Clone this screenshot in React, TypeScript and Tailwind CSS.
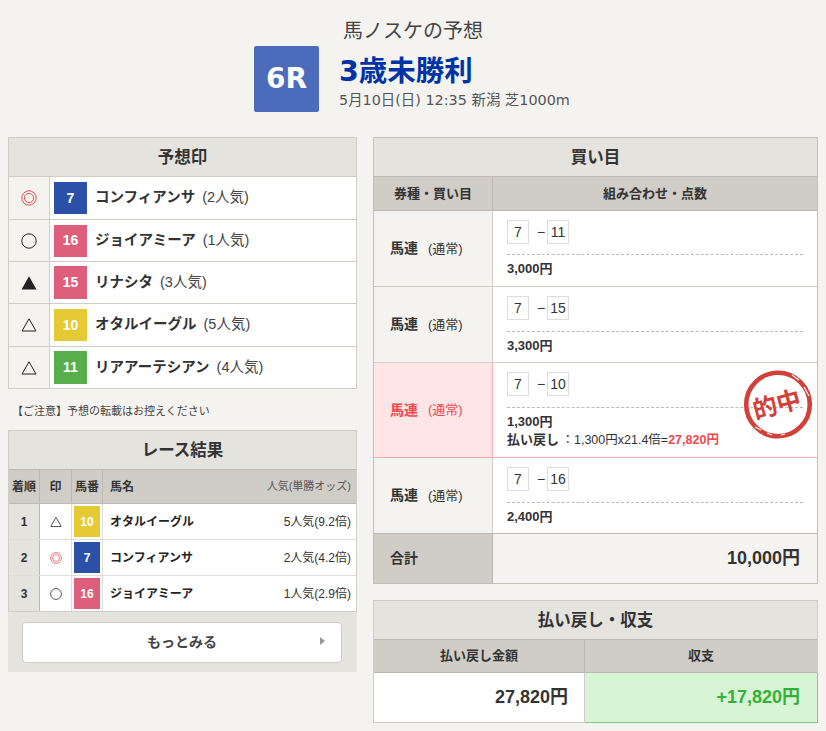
import React from "react";

const FONT = "font-['Liberation_Sans','Noto_Sans_CJK_JP',sans-serif]";
const HEAD_FONT = "font-['DejaVu_Sans','Noto_Sans_CJK_JP',sans-serif]";

type MarkKind = "double" | "circle" | "filled" | "tri";

function Mark({ kind, size = 16 }: { kind: MarkKind; size?: number }) {
  return (
    <svg width={size} height={size} viewBox="0 0 16 16" fill="none">
      {kind === "double" && (
        <>
          <circle cx="8" cy="8" r="7.2" stroke="#e0534f" strokeWidth="1" />
          <circle cx="8" cy="8" r="4.6" stroke="#e0534f" strokeWidth="1" />
        </>
      )}
      {kind === "circle" && <circle cx="8" cy="8" r="7.2" stroke="#222" strokeWidth="1" />}
      {kind === "filled" && <path d="M8 1.2 15.5 14.5H.5Z" fill="#222" />}
      {kind === "tri" && <path d="M8 1.8 15 14H1Z" stroke="#222" strokeWidth="1" strokeLinejoin="miter" />}
    </svg>
  );
}

const colors: Record<number, string> = {
  7: "bg-[#2b50a8]",
  16: "bg-[#de5f7c]",
  15: "bg-[#de5f7c]",
  10: "bg-[#e5c935]",
  11: "bg-[#57ae4a]",
};

const yosou: { mark: MarkKind; n: number; name: string; pop: string; h: string; bh: string }[] = [
  { mark: "double", n: 7, name: "コンフィアンサ", pop: "(2人気)", h: "h-[43px]", bh: "h-[32px]" },
  { mark: "circle", n: 16, name: "ジョイアミーア", pop: "(1人気)", h: "h-[42px]", bh: "h-[32px]" },
  { mark: "filled", n: 15, name: "リナシタ", pop: "(3人気)", h: "h-[42px]", bh: "h-[33px]" },
  { mark: "tri", n: 10, name: "オタルイーグル", pop: "(5人気)", h: "h-[43px]", bh: "h-[32px]" },
  { mark: "tri", n: 11, name: "リアアーテシアン", pop: "(4人気)", h: "h-[42px]", bh: "h-[33px]" },
];

const result: { rank: number; mark: MarkKind; n: number; name: string; odds: string; h: string }[] = [
  { rank: 1, mark: "tri", n: 10, name: "オタルイーグル", odds: "5人気(9.2倍)", h: "h-[36px]" },
  { rank: 2, mark: "double", n: 7, name: "コンフィアンサ", odds: "2人気(4.2倍)", h: "h-[36px]" },
  { rank: 3, mark: "circle", n: 16, name: "ジョイアミーア", odds: "1人気(2.9倍)", h: "h-[36px]" },
];

function PanelTitle({ children }: { children: React.ReactNode }) {
  return (
    <div className="h-[38px] flex items-center justify-center bg-[#e4e3de] text-[16.5px] font-bold text-[#333]">
      {children}
    </div>
  );
}

function Box({ v }: { v: number }) {
  return (
    <span className="w-[22px] h-[24px] flex items-center justify-center bg-white border border-[#dddddd] text-[14px] text-[#333]">
      {v}
    </span>
  );
}

function Combo({ a, b }: { a: number; b: number }) {
  return (
    <div className="flex items-center">
      <Box v={a} />
      <span className="w-[18px] pl-[8px] text-[14px] leading-none text-[#333]">−</span>
      <Box v={b} />
    </div>
  );
}

function Stamp() {
  return (
    <svg className="absolute left-[250px] top-[6px]" width="70" height="71" viewBox="0 0 70 71">
      <circle cx="35" cy="35.5" r="31.8" fill="none" stroke="#d2403a" strokeWidth="4.6" />
      <path d="M49 6 56 11M61 18 66 27M12 58 18 61M24 64 29 66M38 66 42 65" stroke="#fff" strokeWidth="1.2" />
      <text
        x="34"
        y="44"
        textAnchor="middle"
        fontSize="24.5"
        fontWeight="700"
        fill="#d2403a"
        transform="rotate(-15 35 36)"
        fontFamily="'Noto Sans CJK JP', sans-serif"
      >
        的中
      </text>
    </svg>
  );
}

function BetRow({
  a,
  b,
  price,
  h,
  hit,
  last,
  first,
}: {
  a: number;
  b: number;
  price: string;
  h: string;
  hit?: boolean;
  last?: boolean;
  first?: boolean;
}) {
  const line = hit ? "border-[#f5aeae]" : "border-[#d0cdc6]";
  return (
    <div className={`flex ${h} border-b ${last ? "border-b-0" : line} relative ${hit ? "-mx-[1px] border-x" : ""}`}>
      <div
        className={`w-[119px] shrink-0 border-r ${line} flex items-center pl-[16px] ${
          hit ? "bg-[#ffe5e5] text-[#f0484e]" : "bg-[#f4f3ef] text-[#333]"
        }`}
      >
        <span className="text-[14px] font-bold">馬連</span>
        <span className="text-[13px] ml-[10px]">(通常)</span>
      </div>
      <div className="flex-1 bg-white px-[14px] pt-[9px] relative">
        <Combo a={a} b={b} />
        <div
          className={`border-t border-dashed border-[#bbbbbb] ${
            first ? "mt-[10px]" : "mt-[11px]"
          } pt-[5px] text-[13px] leading-[18px] font-bold text-[#333]`}
        >
          {price}
          {hit && (
            <div className="whitespace-nowrap">
              払い戻し
              <span className="font-normal text-[12.5px] -ml-[1px]"> ：1,300円x21.4倍=</span>
              <span className="text-[#f0484e] text-[12.5px]">27,820円</span>
            </div>
          )}
        </div>
        {hit && <Stamp />}
      </div>
    </div>
  );
}

export default function App() {
  return (
    <div className={`w-[826px] h-[731px] overflow-hidden bg-[#f4f3ef] text-[#333] ${FONT}`}>
      <header className={`${HEAD_FONT} pt-[18px] h-[137px]`}>
        <div className="text-center text-[20px] leading-[26px] text-[#444]">馬ノスケの予想</div>
        <div className="flex items-start ml-[254px] mt-[2px]">
          <div className="w-[65px] h-[66px] rounded-[2px] bg-[#4d6bbb] text-white text-[28px] font-bold flex items-center justify-center">
            6R
          </div>
          <div className="ml-[20px]">
            <div className="text-[28.5px] leading-[36px] mt-[8px] font-bold text-[#0033a5]">3歳未勝利</div>
            <div className="text-[14.4px] leading-[18px] text-[#555] mt-[1px]">5月10日(日) 12:35 新潟 芝1000m</div>
          </div>
        </div>
      </header>

      <main className="flex items-start pl-[8px] gap-[16px]">
        <div className="w-[349px]">
          <section className="border border-[#d0cdc6]">
            <PanelTitle>予想印</PanelTitle>
            {yosou.map((r) => (
              <div key={r.name} className={`flex ${r.h} border-t border-[#d0cdc6]`}>
                <div className="w-[41px] shrink-0 bg-[#f4f3ef] border-r border-[#d0cdc6] flex items-center justify-center">
                  <Mark kind={r.mark} />
                </div>
                <div className="flex-1 bg-white flex items-center pl-[4px]">
                  <div
                    className={`w-[33px] ${r.bh} ${colors[r.n]} text-white text-[14px] font-bold flex items-center justify-center`}
                  >
                    {r.n}
                  </div>
                  <span className="ml-[8px] text-[14.5px] font-bold text-[#333]">{r.name}</span>
                  <span className="ml-[7px] text-[14.5px] text-[#444]">{r.pop}</span>
                </div>
              </div>
            ))}
          </section>

          <p className="text-[11px] leading-[16px] text-[#444] mt-[14px] ml-[4px] h-[27px]">【ご注意】予想の転載はお控えください</p>

          <section className="bg-[#e4e3de]">
            <div className="border-x border-t border-[#d0cdc6]">
              <PanelTitle>レース結果</PanelTitle>
              <div className="flex h-[35px] bg-[#d0cdc6] border-y border-[#bdb9b0] text-[12px] font-bold text-[#333] items-stretch">
                <div className="w-[31px] border-r border-[#bdb9b0] flex items-center justify-center">着順</div>
                <div className="w-[32px] border-r border-[#bdb9b0] flex items-center justify-center">印</div>
                <div className="w-[31px] border-r border-[#bdb9b0] flex items-center justify-center">馬番</div>
                <div className="flex-1 flex items-center justify-between pl-[7px] pr-[5px]">
                  <span>馬名</span>
                  <span className="font-normal text-[11px] text-[#555]">人気(単勝オッズ)</span>
                </div>
              </div>
              {result.map((r, i) => (
                <div key={r.rank} className={`flex ${r.h} bg-white ${i < 2 ? "border-b border-[#e0ded8]" : "border-b border-[#d0cdc6]"}`}>
                  <div className="w-[31px] bg-[#e4e3de] border-r border-[#bdb9b0] flex items-center justify-center text-[12px] font-bold">
                    {r.rank}
                  </div>
                  <div className="w-[32px] border-r border-[#e0ded8] flex items-center justify-center">
                    <Mark kind={r.mark} size={12} />
                  </div>
                  <div className="w-[31px] border-r border-[#e0ded8] flex items-center justify-center">
                    <div
                      className={`w-[26px] h-[31px] ${colors[r.n]} text-white text-[12px] font-bold flex items-center justify-center`}
                    >
                      {r.n}
                    </div>
                  </div>
                  <div className="flex-1 flex items-center justify-between pl-[7px] pr-[5px] text-[12px]">
                    <span className="font-bold text-[#222]">{r.name}</span>
                    <span className="text-[#333]">{r.odds}</span>
                  </div>
                </div>
              ))}
            </div>
            <div className="h-[60px] px-[14px] pt-[10px]">
              <button className="relative w-[320px] h-[41px] bg-white border border-[#d0cdc6] rounded-[4px] text-[14px] font-bold text-[#444] flex items-center justify-center">
                もっとみる
                <span className="absolute right-[16px] top-[14px] w-0 h-0 border-y-[4px] border-y-transparent border-l-[5px] border-l-[#999]" />
              </button>
            </div>
          </section>
        </div>

        <div className="w-[445px]">
          <section className="border border-[#c4c0b8]">
            <PanelTitle>買い目</PanelTitle>
            <div className="flex h-[35px] bg-[#d0cdc6] border-y border-[#bdb9b0] text-[13px] font-bold text-[#333]">
              <div className="w-[119px] shrink-0 border-r border-[#bdb9b0] flex items-center justify-center">券種・買い目</div>
              <div className="flex-1 flex items-center justify-center">組み合わせ・点数</div>
            </div>
            <BetRow a={7} b={11} price="3,000円" h="h-[76px]" first />
            <BetRow a={7} b={15} price="3,300円" h="h-[76px]" />
            <BetRow a={7} b={10} price="1,300円" h="h-[95px]" hit />
            <BetRow a={7} b={16} price="2,400円" h="h-[75px]" last />
            <div className="flex h-[50px] border-t border-[#bdb9b0]">
              <div className="w-[119px] shrink-0 bg-[#d0cdc6] border-r border-[#bdb9b0] flex items-center pl-[16px] text-[14px] font-bold">合計</div>
              <div className="flex-1 bg-[#f4f3ef] flex items-center justify-end pr-[17px] text-[18px] font-bold text-[#333]">10,000円</div>
            </div>
          </section>

          <section className="border border-[#d0cdc6] mt-[16px]">
            <PanelTitle>払い戻し・収支</PanelTitle>
            <div className="flex h-[34px] bg-[#d0cdc6] border-y border-[#bdb9b0] text-[13px] font-bold text-[#333]">
              <div className="w-[211px] border-r border-[#bdb9b0] flex items-center justify-center">払い戻し金額</div>
              <div className="flex-1 flex items-center justify-center">収支</div>
            </div>
            <div className="flex h-[49px] text-[18px] font-bold">
              <div className="w-[211px] bg-white border-r border-[#d0cdc6] flex items-center justify-end pr-[16px] text-[#333]">27,820円</div>
              <div className="flex-1 -mr-[1px] -mb-[1px] bg-[#d7f4d4] border-r border-b border-[#86c986] flex items-center justify-end pr-[17px] text-[#33b03a]">+17,820円</div>
            </div>
          </section>
        </div>
      </main>
    </div>
  );
}
